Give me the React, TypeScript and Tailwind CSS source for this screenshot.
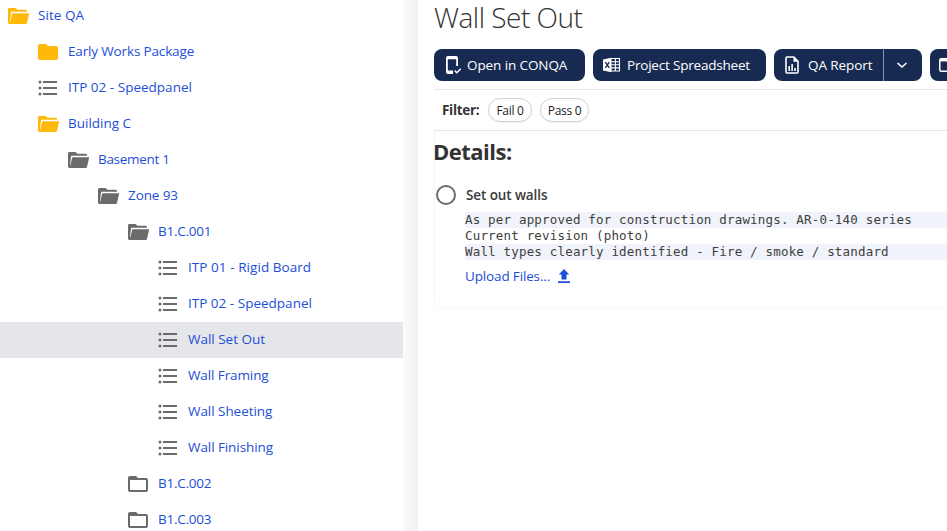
import React from "react";

type IconKind = "open" | "closed" | "outline" | "list";

interface TreeRow {
  label: string;
  depth: string;
  kind: IconKind;
  color: string;
  tracking: string;
  selected?: boolean;
}

const iconPaths: Record<IconKind, string> = {
  open: "M19.6,20H3.4C2.6,20 2,19.4 2,18.6V5.4C2,4.6 2.6,4 3.4,4H9.5L11.5,5.8H19.6C20.4,5.8 21,6.4 21,7.2V7.8H5.2L4,16.5V18.5L6.3,9.2H23.2L21,19C20.8,19.6 20.3,20 19.6,20Z",
  closed:
    "M10,4H4C2.89,4 2,4.89 2,6V18A2,2 0 0,0 4,20H20A2,2 0 0,0 22,18V8C22,6.89 21.1,6 20,6H12L10,4Z",
  outline:
    "M20,18H4V8H20M20,6H12L10,4H4C2.89,4 2,4.89 2,6V18A2,2 0 0,0 4,20H20A2,2 0 0,0 22,18V8C22,6.89 21.1,6 20,6Z",
  list: "M7,5H21V7H7V5M7,13V11H21V13H7M4,4.5A1.5,1.5 0 0,1 5.5,6A1.5,1.5 0 0,1 4,7.5A1.5,1.5 0 0,1 2.5,6A1.5,1.5 0 0,1 4,4.5M4,10.5A1.5,1.5 0 0,1 5.5,12A1.5,1.5 0 0,1 4,13.5A1.5,1.5 0 0,1 2.5,12A1.5,1.5 0 0,1 4,10.5M7,19V17H21V19H7M4,16.5A1.5,1.5 0 0,1 5.5,18A1.5,1.5 0 0,1 4,19.5A1.5,1.5 0 0,1 2.5,18A1.5,1.5 0 0,1 4,16.5Z",
};

const yellow = "text-[#ffb90a]";
const gray = "text-[#6b6b6b]";

const rows: TreeRow[] = [
  { label: "Site QA", depth: "pl-[6px]", kind: "open", color: yellow, tracking: "tracking-[0.04px]" },
  { label: "Early Works Package", depth: "pl-[36px]", kind: "closed", color: yellow, tracking: "tracking-[-0.15px]" },
  { label: "ITP 02 - Speedpanel", depth: "pl-[36px]", kind: "list", color: gray, tracking: "tracking-[0.01px]" },
  { label: "Building C", depth: "pl-[36px]", kind: "open", color: yellow, tracking: "tracking-[0px]" },
  { label: "Basement 1", depth: "pl-[66px]", kind: "open", color: gray, tracking: "tracking-[-0.3px]" },
  { label: "Zone 93", depth: "pl-[96px]", kind: "open", color: gray, tracking: "tracking-[-0.1px]" },
  { label: "B1.C.001", depth: "pl-[126px]", kind: "open", color: gray, tracking: "tracking-[-0.25px]" },
  { label: "ITP 01 - Rigid Board", depth: "pl-[156px]", kind: "list", color: gray, tracking: "tracking-[0.06px]" },
  { label: "ITP 02 - Speedpanel", depth: "pl-[156px]", kind: "list", color: gray, tracking: "tracking-[0.01px]" },
  { label: "Wall Set Out", depth: "pl-[156px]", kind: "list", color: gray, tracking: "tracking-[-0.02px]", selected: true },
  { label: "Wall Framing", depth: "pl-[156px]", kind: "list", color: gray, tracking: "tracking-[-0.1px]" },
  { label: "Wall Sheeting", depth: "pl-[156px]", kind: "list", color: gray, tracking: "tracking-[-0.05px]" },
  { label: "Wall Finishing", depth: "pl-[156px]", kind: "list", color: gray, tracking: "tracking-[-0.08px]" },
  { label: "B1.C.002", depth: "pl-[126px]", kind: "outline", color: gray, tracking: "tracking-[-0.25px]" },
  { label: "B1.C.003", depth: "pl-[126px]", kind: "outline", color: gray, tracking: "tracking-[-0.25px]" },
];

function Tree() {
  return (
    <nav className="-mt-[2px] w-[403px] shrink-0">
      {rows.map((row, i) => (
        <div
          key={i}
          className={`flex h-9 items-center gap-2 ${row.depth} ${row.selected ? "bg-[#e5e6ea]" : ""}`}
        >
          <svg className={`size-6 shrink-0 ${row.color}`} viewBox="0 0 24 24" fill="currentColor">
            <path d={iconPaths[row.kind]} />
          </svg>
          <a className={`-mt-[2px] text-[13.5px] leading-5 whitespace-nowrap text-[#1d4ed8] ${row.tracking}`}>
            {row.label}
          </a>
        </div>
      ))}
    </nav>
  );
}

function PhoneCheckIcon() {
  return (
    <svg className="h-5 w-[18px] shrink-0" viewBox="0 0 18 20" fill="none" stroke="currentColor">
      <path
        fill="currentColor"
        stroke="none"
        d="M3 1h8a2 2 0 0 1 2 2v8h-1.8V4.2H2.8v11.3H8V19H3a2 2 0 0 1-2-2V3a2 2 0 0 1 2-2Z"
      />
      <path d="m9.7 15.6 2.2 2.2 3.8-4" strokeWidth="1.5" />
    </svg>
  );
}

function SpreadsheetIcon() {
  return (
    <svg className="h-4 w-[18px] shrink-0" viewBox="0 0 18 16">
      <path d="M7 1.5h9.5v12.5H7M7 4.7h9.5M7 7.8h9.5M7 10.9h9.5M12.4 1.5v12.5" fill="none" stroke="#fff" strokeWidth="1.1" />
      <path d="M0 2.5 8.5 .8v14.4L0 13.5Z" fill="#fff" />
      <path d="m2.3 5.2 4 5.6M6.3 5.2l-4 5.6" stroke="#172b52" strokeWidth="1.4" />
    </svg>
  );
}

function ReportIcon() {
  return (
    <svg className="h-[18px] w-[14px] shrink-0" viewBox="0 0 14 18" fill="none" stroke="#fff" strokeWidth="1.6">
      <path d="M2 1h6.8L13 5.3V16a1 1 0 0 1-1 1H2a1 1 0 0 1-1-1V2a1 1 0 0 1 1-1Z" />
      <path d="M8.5 1h.6L13 5.3v.4H8.5Z" fill="#fff" stroke="none" />
      <path d="M4.2 15V10M7.1 15V8M10 15v-3" />
    </svg>
  );
}

function Toolbar() {
  return (
    <div className="flex h-8 w-[620px] shrink-0 gap-2 text-[13.5px] text-white">
      <button className="flex w-[151px] shrink-0 items-center rounded-lg bg-[#172b52] pl-[11px] whitespace-nowrap">
        <PhoneCheckIcon />
        <span className="ml-[4px] tracking-[-0.1px]">Open in CONQA</span>
      </button>
      <button className="flex w-[173px] shrink-0 items-center rounded-lg bg-[#172b52] pl-[10px] whitespace-nowrap">
        <SpreadsheetIcon />
        <span className="ml-[6px] tracking-[-0.2px]">Project Spreadsheet</span>
      </button>
      <div className="flex w-[148px] shrink-0 overflow-hidden rounded-lg bg-[#172b52]">
        <button className="flex w-[109px] items-center pl-[11px] whitespace-nowrap">
          <ReportIcon />
          <span className="ml-[9px] tracking-[-0.08px]">QA Report</span>
        </button>
        <button className="flex grow items-center justify-center border-l border-[#8b95a8] pr-[2px]">
          <svg className="h-3 w-3" viewBox="0 0 12 12" fill="none" stroke="#fff" strokeWidth="1.6">
            <path d="m1.5 4 4.5 4 4.5-4" />
          </svg>
        </button>
      </div>
      <button className="flex w-[120px] shrink-0 items-center rounded-lg bg-[#172b52] pl-[9px]">
        <svg className="h-[14px] w-[14px]" viewBox="0 0 14 14" fill="none" stroke="#fff">
          <rect x=".8" y=".8" width="12.4" height="12.4" rx="1.5" strokeWidth="1.5" />
          <path d="M1 2.2h12" strokeWidth="2.5" />
        </svg>
      </button>
    </div>
  );
}

export default function App() {
  return (
    <div className="flex h-[531px] w-[947px] overflow-hidden bg-white font-['Open_Sans','Noto_Sans',sans-serif]">
      <Tree />
      <div className="w-[15px] shrink-0 bg-linear-to-r from-[#fbfbfb] to-[#f0f0f0]" />
      <main className="flex min-w-0 grow flex-col overflow-hidden pl-4">
        <h1 className="h-[49px] text-[28px] leading-[34px] font-light tracking-[-0.5px] whitespace-nowrap text-[#333]">
          Wall Set Out
        </h1>
        <Toolbar />
        <div className="mt-2 flex h-[42px] shrink-0 items-center border-y border-[#e5e5e5] pl-2">
          <span className="w-[46px] pt-px text-[13.5px] font-bold tracking-[-0.3px] text-[#333]">Filter:</span>
          <span className="flex h-6 w-11 items-center justify-center rounded-full border border-[#d1d1db] pt-px text-xs font-medium tracking-[-0.3px] whitespace-nowrap text-[#222] shadow-xs">
            Fail 0
          </span>
          <span className="ml-2 flex h-6 w-[49px] items-center justify-center rounded-full border border-[#d1d1db] pt-px text-xs font-medium tracking-[-0.3px] whitespace-nowrap text-[#222] shadow-xs">
            Pass 0
          </span>
        </div>
        <section className="h-[178px] shrink-0 rounded-bl-lg border-b border-l border-[#f7f7f7]">
          <h2 className="-ml-[2px] pt-[5px] text-[22px] leading-[30px] font-bold tracking-[-0.5px] text-[#333]">Details:</h2>
          <div className="mt-[17px] flex h-6 items-center">
            <span className="ml-px size-5 rounded-full border-2 border-[#6b6b6b]" />
            <span className="ml-[10px] pt-px text-[13.5px] font-semibold tracking-[-0.1px] text-[#3a3a3a]">Set out walls</span>
          </div>
          <div className="mt-[5px] ml-[30px] font-['DejaVu_Sans_Mono',monospace] text-[12.5px] leading-4 tracking-[0.18px] whitespace-pre text-[#404040]">
            <div className="h-4 bg-[#f0f3f9]">As per approved for construction drawings. AR-0-140 series</div>
            <div className="h-4">Current revision (photo)</div>
            <div className="h-4 bg-[#f0f3f9]">Wall types clearly identified - Fire / smoke / standard</div>
          </div>
          <a className="mt-[6px] ml-[30px] flex h-5 items-center text-[13.5px] text-[#1d4ed8]">
            <span className="w-[85px] tracking-[-0.15px] whitespace-nowrap">Upload Files...</span>
            <svg className="ml-[8px] h-[14px] w-3" viewBox="0 0 12 14" fill="currentColor">
              <path d="M6 0 .8 5.6H3.5V10.5h5V5.6h2.7ZM0 12.2h12V14H0Z" />
            </svg>
          </a>
        </section>
      </main>
    </div>
  );
}
